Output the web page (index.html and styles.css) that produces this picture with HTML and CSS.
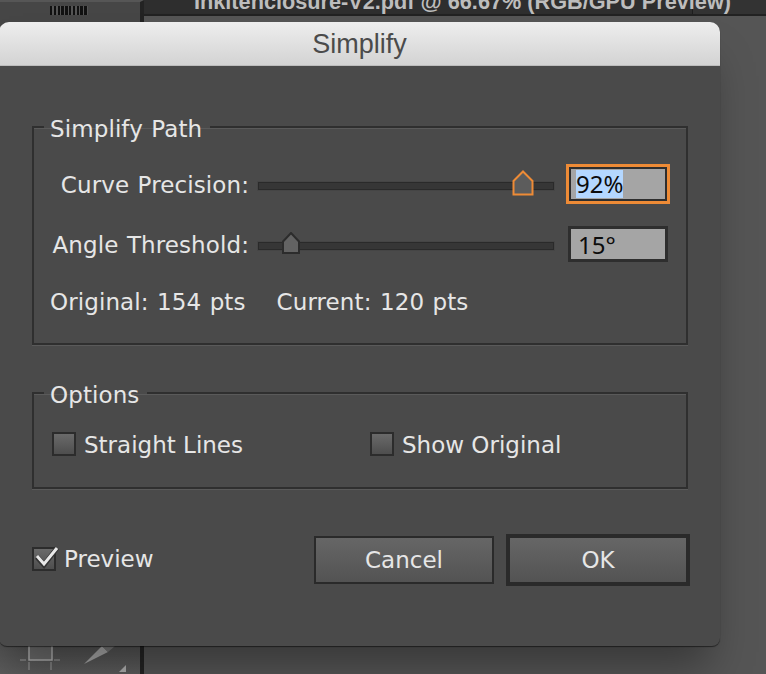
FILE: index.html
```html
<!DOCTYPE html>
<html lang="en">
<head>
    <meta charset="UTF-8">
    <meta name="viewport" content="width=device-width, initial-scale=1.0">
    <title>Simplify</title>
    <link rel="stylesheet" href="styles.css">
</head>
<body>
    <div class="app-back">
        <div class="app-side">
            <div class="grip"></div>
            <svg class="tools" width="140" height="30" viewBox="0 0 140 30">
                <rect x="29" y="-2" width="23" height="18" fill="#6a6a6a" stroke="#b0b0b0" stroke-width="1.5"/>
                <path d="M20 16H26M54 16H60M29 18V26M51 18V26" stroke="#888" stroke-width="1.5" fill="none"/>
                <path d="M84 20L102 2L108 8Z" fill="#a8a8a8"/>
                <path d="M102 2H115L108 8Z" fill="#777"/>
                <path d="M119 28L126 21V28Z" fill="#b0b0b0"/>
            </svg>
        </div>
        <div class="app-main">
            <div class="doc-tab"><span class="doc-title">Inkitenclosure-V2.pdf @ 66.67% (RGB/GPU Preview)</span></div>
        </div>
    </div>

    <div class="dialog">
        <div class="title-bar">Simplify</div>
        <div class="dialog-body">
            <fieldset class="group group-path">
                <legend>Simplify Path</legend>
                <div class="slider-row">
                    <label class="slider-label">Curve Precision:</label>
                    <div class="track">
                        <svg class="thumb thumb-curve" width="22" height="26" viewBox="0 0 22 26">
                            <path d="M1.5 11L11 1.5L20.5 11V24.5H1.5Z" fill="#5c5c5c" stroke="#ee8b36" stroke-width="2"/>
                        </svg>
                    </div>
                    <div class="field field-focus"><span class="selected">92%</span></div>
                </div>
                <div class="slider-row">
                    <label class="slider-label">Angle Threshold:</label>
                    <div class="track">
                        <svg class="thumb thumb-angle" width="18" height="22" viewBox="0 0 18 22">
                            <path d="M1 9.5L9 1L17 9.5V21H1Z" fill="#636363" stroke="#2c2c2c" stroke-width="2"/>
                        </svg>
                    </div>
                    <div class="field"><span>15°</span></div>
                </div>
                <div class="counts">
                    <span>Original: 154 pts</span>
                    <span>Current: 120 pts</span>
                </div>
            </fieldset>

            <fieldset class="group group-options">
                <legend>Options</legend>
                <div class="options-row">
                    <div class="check-item check-straight"><span class="box"></span>Straight Lines</div>
                    <div class="check-item"><span class="box"></span>Show Original</div>
                </div>
            </fieldset>

            <div class="footer">
                <div class="check-item check-preview">
                    <span class="box">
                        <svg class="tick" width="28" height="28" viewBox="0 0 28 28">
                            <path d="M5 14L12 22L25 5" fill="none" stroke="#333" stroke-width="5"/>
                            <path d="M5 13L12 21L25 5" fill="none" stroke="#e8e8e8" stroke-width="3"/>
                        </svg>
                    </span>Preview
                </div>
                <div class="buttons">
                    <button class="btn btn-cancel">Cancel</button>
                    <button class="btn btn-ok">OK</button>
                </div>
            </div>
        </div>
    </div>
</body>
</html>
```

FILE: styles.css
```css
html, body {
    margin: 0;
    height: 100%;
}

body {
    width: 766px;
    height: 674px;
    overflow: hidden;
    position: relative;
    background-color: #555;
    font-family: "DejaVu Sans", Verdana, sans-serif;
    font-size: 23px;
    letter-spacing: 0.1px;
    word-spacing: 1px;
    color: #e6e6e6;
}

/* application behind the dialog */
.app-back {
    display: flex;
    height: 674px;
}

.app-side {
    width: 140px;
    background: linear-gradient(#464646, #464646 600px, #5c5c5c);
    border-top: 2px solid #565656;
    border-right: 4px solid #232323;
    position: relative;
}

.grip {
    width: 38px;
    height: 9px;
    margin: 4px 0 0 50px;
    background: repeating-linear-gradient(90deg, #111 0 2.5px, #555 2.5px 3.8px);
}

.tools {
    position: absolute;
    left: 0;
    bottom: 0;
}

.app-main {
    flex: 1;
    background-color: #555;
}

.doc-tab {
    height: 14px;
    background: linear-gradient(90deg, #2e2e2e 548px, #1e1e1e 548px 549px, #333 549px);
    border-bottom: 2px solid #222;
    overflow: hidden;
    position: relative;
}

.doc-title {
    position: absolute;
    left: 50px;
    top: -11px;
    font-family: "Liberation Sans", Arial, sans-serif;
    font-size: 21.7px;
    font-weight: bold;
    letter-spacing: 0;
    word-spacing: 0;
    white-space: nowrap;
    color: #bdbdbd;
}

/* dialog */
.dialog {
    position: absolute;
    left: -1px;
    top: 22px;
    width: 721px;
    height: 624px;
    background-color: #4a4a4a;
    border-radius: 10px 10px 8px 8px;
    box-shadow: 0 30px 40px -10px rgba(0, 0, 0, 0.35), 0 1px 1px rgba(0, 0, 0, 0.5);
    overflow: hidden;
}

.title-bar {
    height: 43px;
    line-height: 45px;
    text-align: center;
    font-family: "Liberation Sans", Arial, sans-serif;
    font-size: 27px;
    letter-spacing: 0;
    word-spacing: 0;
    color: #4b4b4b;
    background: linear-gradient(#eeeeee, #d3d3d3);
    border-bottom: 1px solid #bdbdbd;
}

.dialog-body {
    padding: 46px 32px 0 33px;
}

.group {
    margin: 0;
    border: 2px solid #2f2f2f;
    box-shadow: 0 1px 0 #5a5a5a, inset 0 1px 0 #5a5a5a;
    padding: 0 16px;
    min-width: 0;
    box-sizing: border-box;
}

.group legend {
    padding: 4px 8px 0 6px;
    margin-left: -6px;
    line-height: 26px;
    white-space: nowrap;
}

.group-path {
    height: 233px;
}

.slider-row {
    display: flex;
    align-items: center;
    height: 44px;
}

.slider-row + .slider-row {
    margin-top: 16px;
}

.group-path .slider-row:first-of-type {
    margin-top: 21px;
}

.slider-label {
    width: 199px;
    text-align: right;
    white-space: nowrap;
}

.track {
    width: 296px;
    height: 8px;
    margin: 2px 0 0 9px;
    background-color: #363636;
    border: 1px solid #2a2a2a;
    box-sizing: border-box;
    box-shadow: 0 0 0 1px #454545;
    position: relative;
}

.thumb {
    position: absolute;
}

.thumb-curve {
    left: 253px;
    top: -13px;
}

.thumb-angle {
    left: 23px;
    top: -11px;
}

.field {
    width: 100px;
    height: 36px;
    box-sizing: border-box;
    margin: 0 0 2px 14px;
    padding-left: 7px;
    background-color: #a5a5a5;
    border: 3px solid #2e2e2e;
    color: #0c0c0c;
    font-family: "Noto Sans", "DejaVu Sans", sans-serif;
    font-size: 24px;
    letter-spacing: 0;
    line-height: 31px;
    overflow: hidden;
    white-space: nowrap;
}

.field-focus {
    width: 104px;
    height: 40px;
    margin-left: 12px;
    padding-left: 7px;
    border: 3px solid #ee8b36;
    box-shadow: inset 0 0 0 2px #2e2e2e;
    line-height: 34px;
}

.selected {
    display: inline-block;
    line-height: 28px;
    background-color: #b4d7ff;
}

.counts {
    display: flex;
    gap: 31px;
    margin-top: 22px;
}

.group-options {
    height: 111px;
    margin-top: 33px;
}

.options-row {
    display: flex;
    margin-top: 24px;
    padding-left: 2px;
}

.options-row .box {
    margin-bottom: 2px;
}

.check-item {
    display: flex;
    align-items: center;
    letter-spacing: 0;
    word-spacing: 0;
    white-space: nowrap;
}

.check-straight {
    width: 318px;
}

.box {
    width: 24px;
    height: 24px;
    box-sizing: border-box;
    margin-right: 8px;
    border: 2px solid #2c2c2c;
    background: linear-gradient(#6a6a6a, #4e4e4e);
    position: relative;
    display: inline-block;
}

.tick {
    position: absolute;
    left: -2px;
    top: -6px;
}

.footer {
    display: flex;
    justify-content: space-between;
    align-items: center;
    margin: 45px -2px 0 0;
}

.check-preview {
    margin-bottom: 2px;
}

.buttons {
    display: flex;
    align-items: center;
    gap: 12px;
}

.btn {
    font-family: inherit;
    font-size: 23px;
    color: #e6e6e6;
    background: linear-gradient(#666, #535353);
    padding: 0;
    box-sizing: border-box;
}

.btn-cancel {
    width: 180px;
    height: 48px;
    border: 2px solid #2a2a2a;
}

.btn-ok {
    width: 184px;
    height: 52px;
    border: 4px solid #2a2a2a;
}
```
